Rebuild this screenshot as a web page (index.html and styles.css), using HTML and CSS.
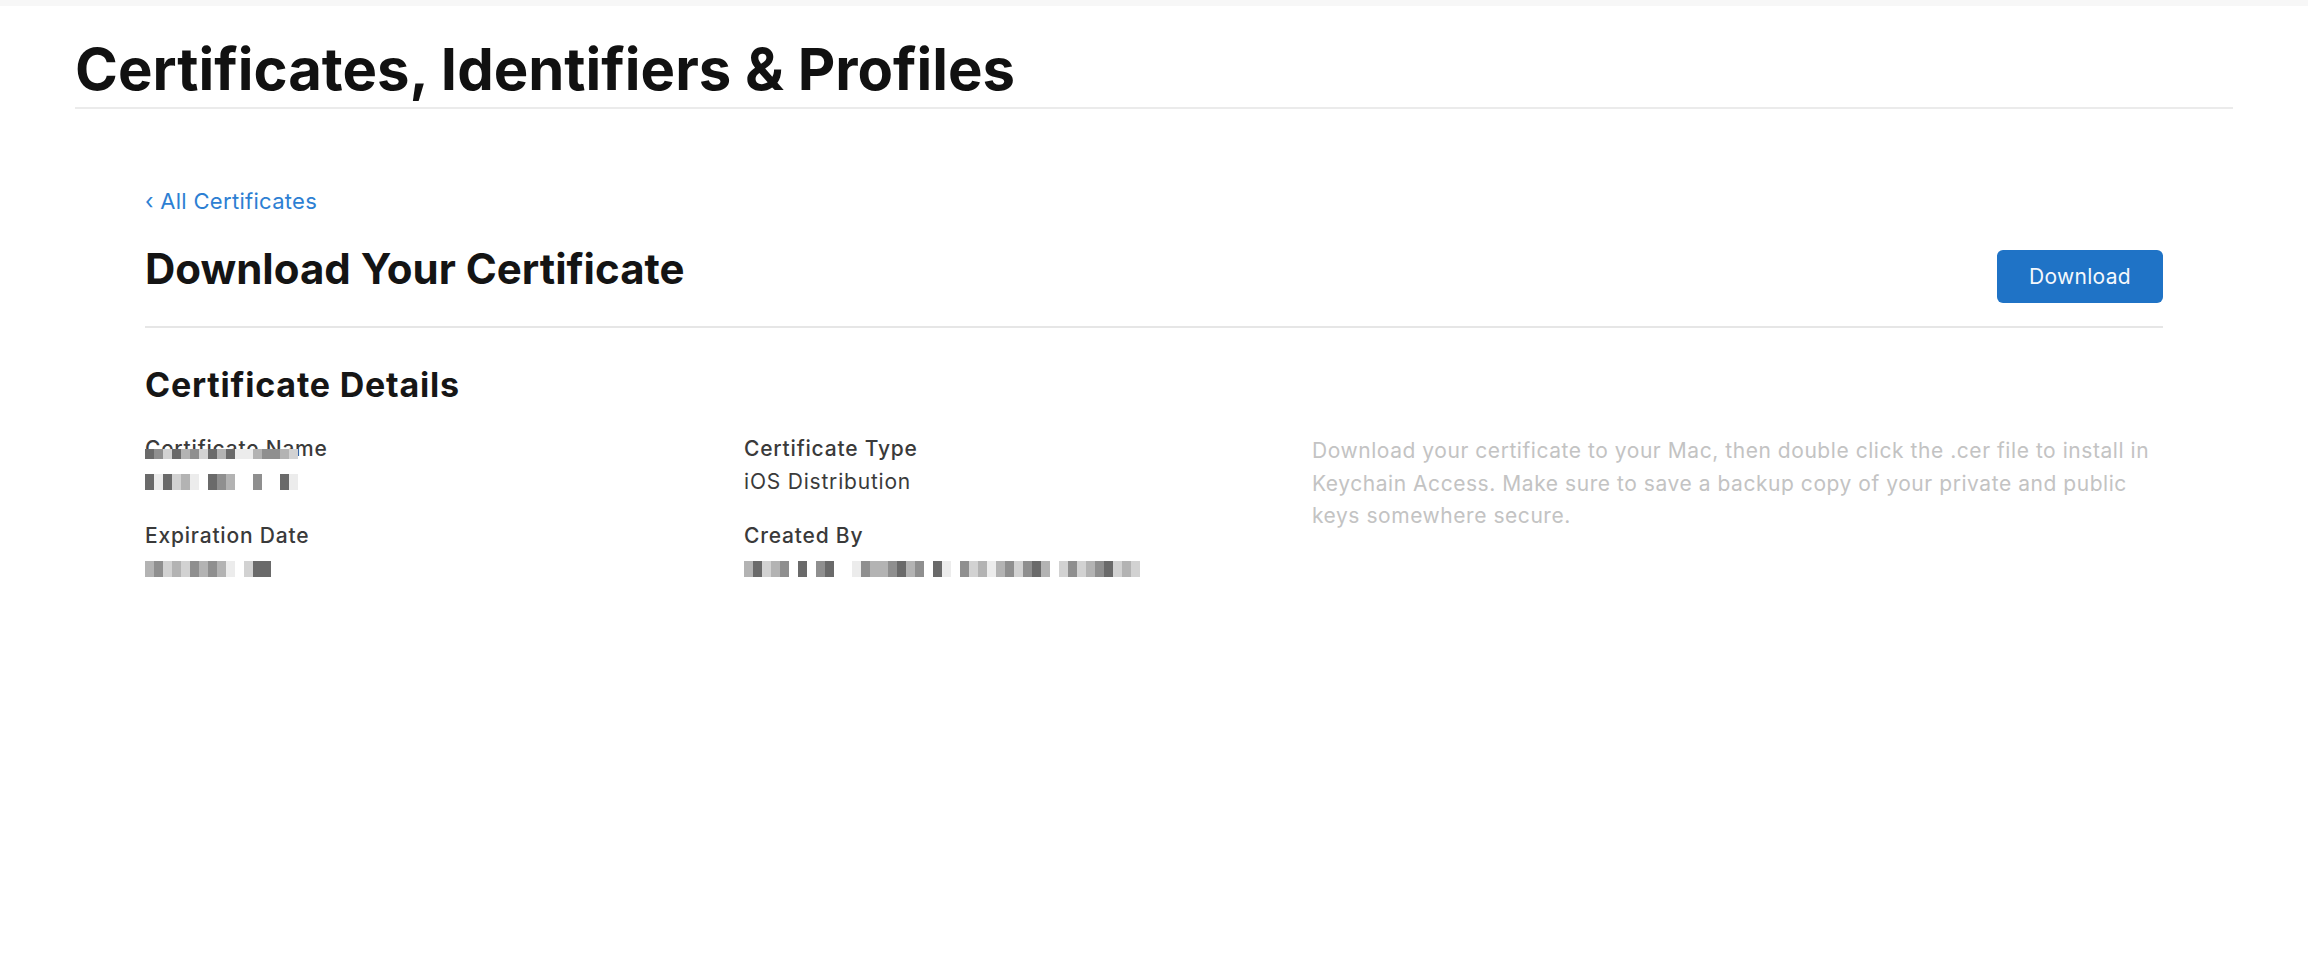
FILE: index.html
```html
<!DOCTYPE html>
<html lang="en">
<head>
<meta charset="utf-8">
<title>Certificates, Identifiers &amp; Profiles</title>
<link rel="stylesheet" href="styles.css">
</head>
<body>
<div class="topbar"></div>
<main class="page">
  <h1 class="page-title">Certificates, Identifiers &amp; Profiles</h1>
  <section class="content">
    <a class="back-link" href="#">&lsaquo; All Certificates</a>
    <div class="header-row">
      <h2 class="section-title">Download Your Certificate</h2>
      <button class="btn-primary" type="button">Download</button>
    </div>
    <h3 class="details-title">Certificate Details</h3>
    <div class="details">
      <div class="col">
        <div class="field">
          <div class="label label-redacted">Certificate Name
            <span class="redact redact-over">
              <i class="s1"></i><i class="s2"></i><i class="s4"></i><i class="s1"></i><i class="s3"></i><i class="s2"></i><i class="s4"></i><i class="s1"></i><i class="s3"></i><i class="s1"></i><i class="s5"></i><i class="s5"></i><i class="s3"></i><i class="s2"></i><i class="s2"></i><i class="s3"></i><i class="s4"></i>
            </span>
          </div>
          <div class="value"><span class="redact">
            <i class="s1"></i><i class="s5"></i><i class="s1"></i><i class="s4"></i><i class="s3"></i><i class="s5"></i><i class="s6"></i><i class="s1"></i><i class="s2"></i><i class="s3"></i><i class="s6"></i><i class="s6"></i><i class="s2"></i><i class="s6"></i><i class="s6"></i><i class="s1"></i><i class="s5"></i>
          </span></div>
        </div>
        <div class="field">
          <div class="label">Expiration Date</div>
          <div class="value"><span class="redact">
            <i class="s3"></i><i class="s2"></i><i class="s4"></i><i class="s3"></i><i class="s4"></i><i class="s2"></i><i class="s3"></i><i class="s2"></i><i class="s3"></i><i class="s5"></i><i class="s6"></i><i class="s4"></i><i class="s1"></i><i class="s1"></i>
          </span></div>
        </div>
      </div>
      <div class="col">
        <div class="field">
          <div class="label">Certificate Type</div>
          <div class="value">iOS Distribution</div>
        </div>
        <div class="field">
          <div class="label">Created By</div>
          <div class="value"><span class="redact">
            <i class="s3"></i><i class="s1"></i><i class="s4"></i><i class="s3"></i><i class="s2"></i><i class="s6"></i><i class="s1"></i><i class="s6"></i><i class="s2"></i><i class="s1"></i><i class="s6"></i><i class="s6"></i><i class="s5"></i><i class="s2"></i><i class="s3"></i><i class="s3"></i><i class="s2"></i><i class="s1"></i><i class="s3"></i><i class="s2"></i><i class="s6"></i><i class="s1"></i><i class="s5"></i><i class="s6"></i><i class="s2"></i><i class="s4"></i><i class="s3"></i><i class="s5"></i><i class="s3"></i><i class="s2"></i><i class="s4"></i><i class="s2"></i><i class="s1"></i><i class="s3"></i><i class="s6"></i><i class="s4"></i><i class="s2"></i><i class="s4"></i><i class="s3"></i><i class="s2"></i><i class="s1"></i><i class="s4"></i><i class="s3"></i><i class="s4"></i>
          </span></div>
        </div>
      </div>
      <p class="help">Download your certificate to your Mac, then double click the .cer file to install in Keychain Access. Make sure to save a backup copy of your private and public keys somewhere secure.</p>
    </div>
  </section>
</main>
</body>
</html>
```

FILE: styles.css
```css
* { box-sizing: border-box; }

html, body {
  margin: 0;
  padding: 0;
  background: #ffffff;
}

body {
  font-family: Inter, "Noto Sans", "Liberation Sans", sans-serif;
  color: #1d1d1f;
}

.topbar {
  height: 6px;
  background: #f7f7f7;
}

.page {
  margin: 0 75px;
}

.page-title {
  margin: 0;
  padding-top: 32px;
  padding-bottom: 6px;
  font-size: 58px;
  line-height: 63px;
  font-weight: 700;
  letter-spacing: 0;
  color: #111111;
  border-bottom: 2px solid #ebebeb;
}

.content {
  padding: 0 70px;
}

.back-link {
  display: block;
  margin-top: 79px;
  font-size: 22px;
  line-height: 26px;
  letter-spacing: 0.3px;
  color: #2d7fd3;
  text-decoration: none;
}

.header-row {
  display: flex;
  justify-content: space-between;
  align-items: flex-start;
  margin-top: 31px;
  padding-bottom: 23px;
  border-bottom: 2px solid #e6e6e6;
}

.section-title {
  margin: 0;
  font-size: 42px;
  line-height: 48px;
  font-weight: 700;
  letter-spacing: 0;
  color: #141414;
}

.btn-primary {
  margin-top: 5px;
  width: 166px;
  height: 53px;
  border: none;
  border-radius: 6px;
  background: #1f73c6;
  color: #f4f8fc;
  font-family: inherit;
  font-size: 21px;
  font-weight: 400;
  letter-spacing: 0.3px;
  cursor: pointer;
}

.details-title {
  margin: 38px 0 0;
  font-size: 34px;
  line-height: 38px;
  font-weight: 700;
  letter-spacing: 0.8px;
  color: #161616;
}

.details {
  display: grid;
  grid-template-columns: 599px 568px 1fr;
  margin-top: 28px;
}

.col {
  display: flex;
  flex-direction: column;
  gap: 21px;
}

.label {
  font-size: 21px;
  line-height: 33px;
  font-weight: 500;
  letter-spacing: 0.8px;
  color: #3a3a3a;
}

.label-redacted {
  position: relative;
  display: inline-block;
  align-self: flex-start;
}

.value {
  font-size: 21px;
  line-height: 33px;
  font-weight: 400;
  letter-spacing: 0.8px;
  color: #3a3a3a;
  height: 33px;
  display: flex;
  align-items: center;
}

.redact {
  display: inline-flex;
  height: 16px;
}

.redact i {
  display: block;
  width: 9px;
  height: 16px;
}

.redact-over {
  position: absolute;
  left: 0;
  top: 17px;
  height: 10px;
}

.redact-over i {
  height: 10px;
}

.s1 { background: #6a6a6a; }
.s2 { background: #8f8f8f; }
.s3 { background: #b3b3b3; }
.s4 { background: #d2d2d2; }
.s5 { background: #ececec; }
.s6 { background: transparent; }

.help {
  margin: 0;
  padding-top: 3px;
  font-size: 21px;
  line-height: 32.5px;
  letter-spacing: 0.55px;
  color: #c3c3c3;
}
```
